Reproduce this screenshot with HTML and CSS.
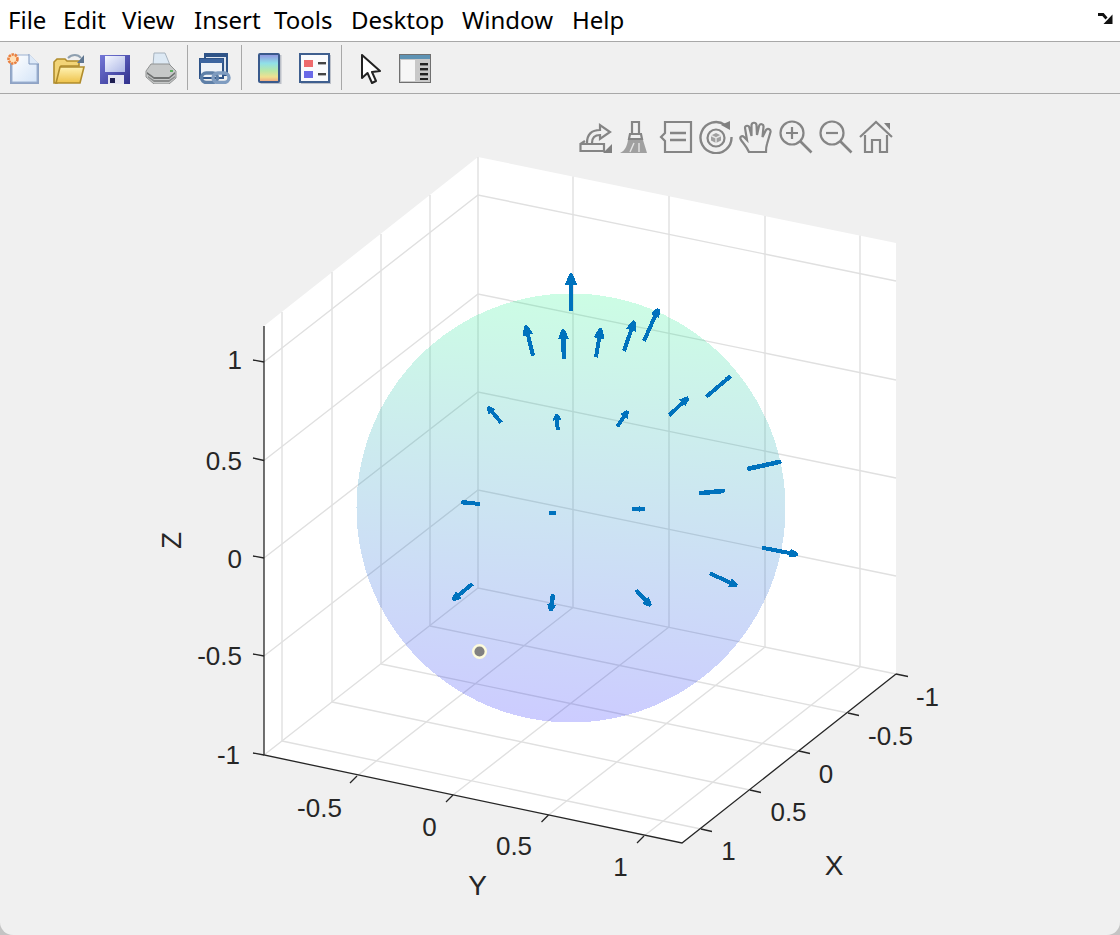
FILE: index.html
```html
<!DOCTYPE html>
<html lang="en">
<head>
<meta charset="utf-8">
<title>Figure</title>
<link rel="stylesheet" href="styles.css">
</head>
<body>
<div class="window">
  <nav class="menubar">
    <span class="menu-item">File</span>
    <span class="menu-item">Edit</span>
    <span class="menu-item">View</span>
    <span class="menu-item">Insert</span>
    <span class="menu-item">Tools</span>
    <span class="menu-item">Desktop</span>
    <span class="menu-item">Window</span>
    <span class="menu-item">Help</span>
    <svg class="undock" viewBox="0 0 16 13"><path d="M1 2.5 H6 L9.5 6.5" fill="none" stroke="#111" stroke-width="2.8"/><path d="M15.5 2.5 V12 H6.5 Z" fill="#111"/></svg>
  </nav>

  <div class="toolbar">
    <button class="tool">
      <svg class="tool-icon" viewBox="0 0 32 32">
        <defs><linearGradient id="pg" x1="0" y1="0" x2="1" y2="1"><stop offset="0" stop-color="#fff"/><stop offset="1" stop-color="#d4e4f8"/></linearGradient></defs>
        <path d="M3 3 H23 L32 12 V33 H3 Z" fill="#8fa3c4"/>
        <path d="M5 3 H22 L30 11 V30 H5 Z" fill="url(#pg)" stroke="#9db2d2" stroke-width="1"/>
        <path d="M22 2 V12 H32" fill="#dde9f8" stroke="#7f97bd"/>
        <circle cx="6" cy="7" r="4.5" fill="#ffe0b8" stroke="#ea8040" stroke-width="2.6" stroke-dasharray="2.4 .8"/>
      </svg>
    </button>
    <button class="tool">
      <svg class="tool-icon" viewBox="0 0 32 32">
        <defs><linearGradient id="fd" x1="0" y1="0" x2="0" y2="1"><stop offset="0" stop-color="#fff3b4"/><stop offset="1" stop-color="#eec24a"/></linearGradient></defs>
        <path d="M1 31 V10 L4 7 H12 L14 9 H26 V14 H8 L4 31 Z" fill="#f2d477" stroke="#b08c2c" stroke-width="1.6"/>
        <path d="M3 31 L7 15 H31 L27 31 Z" fill="url(#fd)" stroke="#b08c2c" stroke-width="1.6"/>
        <path d="M15 6 C19 2 25 2 28 6" fill="none" stroke="#8fa0b0" stroke-width="2"/>
        <path d="M31 3 V11 H24 Z" fill="#5f7690"/>
      </svg>
    </button>
    <button class="tool">
      <svg class="tool-icon" viewBox="0 0 32 32">
        <defs><linearGradient id="fl" x1="0" y1="0" x2="1" y2="1"><stop offset="0" stop-color="#7478d8"/><stop offset="1" stop-color="#30308c"/></linearGradient>
        <linearGradient id="lb" x1="0" y1="0" x2="1" y2="1"><stop offset="0" stop-color="#f4f7ff"/><stop offset="1" stop-color="#aeb8e6"/></linearGradient></defs>
        <path d="M1 3 H31 V32 H1 Z" fill="url(#fl)"/>
        <path d="M6 4 H26 V20 H6 Z" fill="url(#lb)"/>
        <path d="M9 23 H25 V32 H9 Z" fill="#e4e4f0"/>
        <rect x="11" y="26" width="5" height="5" fill="#1e1e50"/>
      </svg>
    </button>
    <button class="tool">
      <svg class="tool-icon" viewBox="0 0 32 32">
        <path d="M9 1 H20 L25 13 H8 Z" fill="#dde9f4" stroke="#a6b2bd"/>
        <path d="M6 12 H24 L31 19 V26 L24 32 H9 L1 25 V19 Z" fill="#c6c8c8" stroke="#909292"/>
        <path d="M2 20 L9 25 H24 L30 20 V22 L24 27 H9 L2 22 Z" fill="#6e7070"/>
        <path d="M3 24 L9 28 H24 L30 24 V25.5 L24 30 H9 L3 25.5 Z" fill="#8a8c8c"/>
        <rect x="25" y="18" width="3" height="2" fill="#5bb060"/>
      </svg>
    </button>
    <span class="sep"></span>
    <button class="tool">
      <svg class="tool-icon" viewBox="0 0 32 32">
        <rect x="6" y="2" width="22" height="21" fill="#dfe6f0" stroke="#2f5488" stroke-width="2"/>
        <rect x="6" y="1" width="22" height="4" fill="#2f5488"/>
        <rect x="1" y="7" width="23" height="19" fill="#eef2f7" stroke="#2f5488" stroke-width="2"/>
        <rect x="1" y="7" width="23" height="4" fill="#3c65a0"/>
        <rect x="2.5" y="21" width="16" height="9.5" rx="4.7" fill="none" stroke="#5f80a8" stroke-width="3.4"/>
        <rect x="14" y="21" width="16" height="9.5" rx="4.7" fill="none" stroke="#7f9cc0" stroke-width="3.4"/>
      </svg>
    </button>
    <span class="sep"></span>
    <button class="tool">
      <svg class="tool-icon" viewBox="0 0 32 32">
        <defs><linearGradient id="cb" x1="0" y1="0" x2="0" y2="1"><stop offset="0" stop-color="#9090e0"/><stop offset=".33" stop-color="#90e0e8"/><stop offset=".6" stop-color="#b8e8a8"/><stop offset=".82" stop-color="#f0e090"/><stop offset="1" stop-color="#f0a080"/></linearGradient></defs>
        <rect x="7.5" y="3" width="21" height="29" fill="#bcc0c8"/>
        <rect x="6" y="2" width="20" height="28" rx="1" fill="url(#cb)" stroke="#3a5a8c" stroke-width="2"/>
      </svg>
    </button>
    <button class="tool">
      <svg class="tool-icon" viewBox="0 0 32 32">
        <rect x="2" y="3" width="30" height="29" fill="#bcc0c8"/>
        <rect x="1" y="2" width="29" height="28" fill="#fafbfd" stroke="#3f5f8f" stroke-width="2"/>
        <rect x="5" y="8" width="9" height="7" fill="#ee6b6e"/>
        <rect x="5" y="19" width="9" height="7" fill="#6a6ae8"/>
        <rect x="19" y="10" width="8" height="2.4" fill="#444"/>
        <rect x="19" y="21" width="8" height="2.4" fill="#444"/>
      </svg>
    </button>
    <span class="sep"></span>
    <button class="tool">
      <svg class="tool-icon cursor-icon" viewBox="0 0 32 32">
        <path d="M7 3 L7 26 L12.5 21 L17 31 L21 29 L17 20 L25 19 Z" fill="#fff" stroke="#222" stroke-width="2" stroke-linejoin="round"/>
      </svg>
    </button>
    <button class="tool">
      <svg class="tool-icon" viewBox="0 0 32 32">
        <rect x="0.5" y="2.5" width="31" height="28" fill="#c8c8c8" stroke="#707070"/>
        <rect x="1" y="3" width="30" height="4" fill="#5e93b4"/>
        <rect x="2" y="8" width="14" height="21" fill="#f6f6f6"/>
        <rect x="21" y="11" width="8" height="2.4" fill="#222"/>
        <rect x="21" y="16" width="8" height="2.4" fill="#222"/>
        <rect x="21" y="21" width="8" height="2.4" fill="#222"/>
        <rect x="21" y="26" width="8" height="2" fill="#222"/>
      </svg>
    </button>
  </div>

  <main class="figure">
    <svg class="plot" viewBox="0 94 1120 841" xmlns="http://www.w3.org/2000/svg">
      <defs>
        <linearGradient id="sphere" gradientUnits="userSpaceOnUse" x1="582" y1="294" x2="560" y2="722">
          <stop offset="0" stop-color="#00f57a"/>
          <stop offset="1" stop-color="#0000ff"/>
        </linearGradient>
        <marker id="h12" markerUnits="userSpaceOnUse" markerWidth="13" markerHeight="14" refX="0" refY="7" orient="auto"><path d="M0 .5 L10 5 L12 6 L12 8 L10 9 L0 13.5 Z" fill="#0072bd"/></marker>
        <marker id="h10" markerUnits="userSpaceOnUse" markerWidth="11" markerHeight="13" refX="0" refY="6.5" orient="auto"><path d="M0 1.2 L8 4 L10 5.5 L10 7.5 L8 9 L0 11.8 Z" fill="#0072bd"/></marker>
        <marker id="h8" markerUnits="userSpaceOnUse" markerWidth="9" markerHeight="11" refX="0" refY="5.5" orient="auto"><path d="M0 1 L6 3 L8 4.2 L8 6.8 L6 8 L0 10 Z" fill="#0072bd"/></marker>
        <marker id="h7" markerUnits="userSpaceOnUse" markerWidth="8" markerHeight="11" refX="0" refY="5.5" orient="auto"><path d="M0 1 L7 4 L7 7 L0 10 Z" fill="#0072bd"/></marker>
        <marker id="h6" markerUnits="userSpaceOnUse" markerWidth="7" markerHeight="11" refX="0" refY="5.5" orient="auto"><path d="M0 1 L6 4 L6 7 L0 10 Z" fill="#0072bd"/></marker>
        <marker id="h6n" markerUnits="userSpaceOnUse" markerWidth="7" markerHeight="7" refX="0" refY="3.5" orient="auto"><path d="M0 .8 L6 1.8 L6 5.2 L0 6.2 Z" fill="#0072bd"/></marker>
      </defs>

      <polygon class="box" points="478,157 896,243 896,674 682,843 264,755 264,326"/>

      <g class="grid">
        <path d="M478 157 V588 M430 195 V626 M381 234 V664 M332 272 V702 M282 312 V741"/>
        <path d="M573 176.5 V607.5 M669 196 V627 M765 216 V647 M860 235.5 V667"/>
        <path d="M264 362 L478 195 L896 281"/>
        <path d="M264 460.5 L478 294 L896 380"/>
        <path d="M264 558 L478 392 L896 478"/>
        <path d="M264 656 L478 490 L896 576"/>
        <path d="M264 755 L478 588 L896 674"/>
        <path d="M357 776 L573 607.5 M453 795 L669 627 M548.5 815 L765 647 M644 836 L860 667"/>
        <path d="M848 713 L430 626 M799 751 L381 664 M750 790 L332 702 M701 829 L282 741"/>
      </g>

      <circle class="ball" cx="571" cy="508" r="214.5"/>

      <g class="axes">
        <path d="M264 326 V755 L682 843 L896 674"/>
        <path d="M264 362 L253 360 M264 460.5 L253 458 M264 558 L253 556 M264 656 L253 654 M264 755 L253 753"/>
        <path d="M357 776 L350 783 M453 795 L446 802 M548.5 815 L541.5 822 M644 836 L637 843"/>
        <path d="M896 674 L908 676.5 M848 713 L859 715.5 M799 751 L810 753.5 M750 790 L761 792.5 M701 829 L712 831.5"/>
      </g>

      <circle class="marker-dot" cx="479.5" cy="651.5" r="6.3"/>

      <g class="arrows">
        <line x1="571" y1="311" x2="571" y2="285" class="thick" marker-end="url(#h12)"/>
        <line x1="533" y1="355.7" x2="528" y2="335" marker-end="url(#h10)"/>
        <line x1="564" y1="358.7" x2="563.5" y2="339.3" class="thick" marker-end="url(#h10)"/>
        <line x1="596" y1="357.3" x2="599.1" y2="338.2" marker-end="url(#h10)"/>
        <line x1="624" y1="351" x2="631.1" y2="330.2" marker-end="url(#h10)"/>
        <line x1="644" y1="341" x2="655.1" y2="316" marker-end="url(#h8)"/>
        <line x1="706.3" y1="396.7" x2="726.2" y2="379.9" marker-end="url(#h6n)"/>
        <line x1="669.3" y1="415.3" x2="682.5" y2="402.8" marker-end="url(#h8)"/>
        <line x1="617.3" y1="426.7" x2="623.9" y2="416.6" marker-end="url(#h7)"/>
        <line x1="557.7" y1="429.7" x2="557.1" y2="420.3" marker-end="url(#h6)"/>
        <line x1="501.3" y1="422.7" x2="492.2" y2="412" marker-end="url(#h7)"/>
        <line x1="480" y1="504" x2="467.3" y2="502.8" marker-end="url(#h6n)"/>
        <line x1="555.7" y1="513" x2="549" y2="513" class="thick"/>
        <line x1="632" y1="509" x2="638.7" y2="509" class="thick" marker-end="url(#h6n)"/>
        <line x1="699.3" y1="493.3" x2="718.7" y2="491.3" class="thick" marker-end="url(#h6n)"/>
        <line x1="747.3" y1="469" x2="775.5" y2="462.8" class="thick" marker-end="url(#h6n)"/>
        <line x1="762" y1="547.7" x2="789.9" y2="553.1" marker-end="url(#h8)"/>
        <line x1="710" y1="573.3" x2="730" y2="582.6" marker-end="url(#h8)"/>
        <line x1="636" y1="590" x2="645.3" y2="600.1" marker-end="url(#h8)"/>
        <line x1="553" y1="594.3" x2="551.6" y2="604.4" class="thick" marker-end="url(#h7)"/>
        <line x1="472.3" y1="584" x2="458.9" y2="594.9" marker-end="url(#h8)"/>
      </g>

      <g class="ticks ticks-end">
        <text x="242" y="369">1</text>
        <text x="242" y="470">0.5</text>
        <text x="242" y="568">0</text>
        <text x="242" y="665">-0.5</text>
        <text x="240" y="764">-1</text>
      </g>
      <g class="ticks ticks-mid">
        <text x="319.5" y="817">-0.5</text>
        <text x="429.5" y="836">0</text>
        <text x="514" y="855">0.5</text>
        <text x="620.5" y="876">1</text>
        <text x="927.5" y="706">-1</text>
        <text x="890.5" y="745">-0.5</text>
        <text x="826" y="783">0</text>
        <text x="788.5" y="821">0.5</text>
        <text x="728.5" y="860">1</text>
      </g>
      <g class="labels">
        <text x="834" y="875">X</text>
        <text x="477.5" y="895">Y</text>
        <text transform="translate(181 540.5) rotate(-90)">Z</text>
      </g>
    </svg>

    <div class="axes-toolbar">
      <svg class="ax-icon" viewBox="0 0 34 34">
        <path d="M1.5 24 H25 V31 H1.5 Z M1.5 24 L6 21"/>
        <path d="M8 23 C8 14 13 10 21 10 V5 L31 12 L21 19 V15 C16 15 13 18 13 23"/>
        <path class="fill" d="M33 24 V33 H24 Z"/>
      </svg>
      <svg class="ax-icon" viewBox="0 0 34 34">
        <path d="M13 13 V2 H20 V13"/>
        <path d="M11 14 H22 L23 19 H10 Z"/>
        <path class="fill soft" d="M9 20 H24 L28 33 H1 C6 31 8 26 9 20 Z"/>
        <path class="light" d="M15 23 L11 32 M20 23 L20 32"/>
      </svg>
      <svg class="ax-icon" viewBox="0 0 34 34">
        <path d="M6 2 H32 V32 H6 V21 L2 17 L6 13 Z"/>
        <path d="M11 13 H27 M11 20 H27" stroke-width="2.6"/>
      </svg>
      <svg class="ax-icon" viewBox="0 0 34 34">
        <path d="M26 5 A15.5 15.5 0 1 0 32.5 17" stroke-width="2.4"/>
        <path class="fill" d="M22 5 L31 1 L31 10 Z"/>
        <circle cx="17" cy="18" r="8.5" stroke-width="2.2"/>
        <path class="fill soft" d="M17 13 L22 15.5 L22 20.5 L17 23 L12 20.5 L12 15.5 Z"/>
        <path class="light" d="M12 15.5 L17 18 L22 15.5 M17 18 V23"/>
      </svg>
      <svg class="ax-icon" viewBox="0 0 34 34">
        <path d="M10 32 C8 27 5 24 2 20 C0 17 3 15 5 17 L8 20 L6 8 C6 5 10 5 10.5 8 L12.5 16 L12.5 5 C13 2 17 2 17.5 5 L18 15 L20 6 C21 3 25 4 24.5 7 L23.5 17 L27 10 C28.5 8 32 9 31.5 12 L28 24 C27 27 27 29 27 32 Z"/>
      </svg>
      <svg class="ax-icon" viewBox="0 0 34 34">
        <circle cx="13" cy="13" r="11.5"/>
        <path d="M21.5 21.5 L32.5 32.5" stroke-width="2.6"/>
        <path d="M7 13 H19 M13 7 V19"/>
      </svg>
      <svg class="ax-icon" viewBox="0 0 34 34">
        <circle cx="13" cy="13" r="11.5"/>
        <path d="M21.5 21.5 L32.5 32.5" stroke-width="2.6"/>
        <path d="M7 13 H19"/>
      </svg>
      <svg class="ax-icon" viewBox="0 0 34 34">
        <path d="M1 17 L17 2 L33 17"/>
        <path d="M6 15 V32 H13 V20 H21 V32 H28 V15"/>
        <path class="fill" d="M25 3 H31 V10 Z"/>
      </svg>
    </div>
  </main>
</div>
</body>
</html>
```

FILE: styles.css
```css
* { box-sizing: border-box; }

html, body {
  margin: 0;
  height: 100%;
  background: #c4c4c4;
  overflow: hidden;
}

.window {
  width: 1120px;
  height: 935px;
  display: flex;
  flex-direction: column;
  background: #f0f0f0;
  border-radius: 0 0 13px 13px;
  overflow: hidden;
}

.menubar {
  height: 42px;
  flex: none;
  display: grid;
  grid-template-columns: 55px 59px 72px 80px 77px 111px 110px 1fr auto;
  align-items: center;
  padding: 0 0 1px 8px;
  background: #fff;
  border-bottom: 1px solid #a8a8a8;
  font: 24px/1 "Noto Sans", sans-serif;
  color: #000;
}

.undock {
  grid-column: 9;
  width: 16px;
  height: 13px;
  margin-right: 7px;
  margin-top: -3px;
}

.toolbar {
  height: 52px;
  flex: none;
  display: flex;
  align-items: center;
  background: #f0f0f0;
  border-bottom: 1px solid #a8a8a8;
}

.tool {
  width: 46px;
  height: 46px;
  padding: 0;
  border: 0;
  background: none;
  display: flex;
  align-items: center;
  justify-content: center;
}

.tool-icon {
  width: 32px;
  height: 32px;
  display: block;
  filter: blur(0.45px);
}

.cursor-icon { margin-left: 3px; }

.sep {
  width: 1px;
  height: 45px;
  margin: 0 4px 0 3px;
  background: #a8a8a8;
}

.figure {
  position: relative;
  flex: 1;
}

.plot {
  display: block;
  width: 1120px;
  height: 841px;
}

.box { fill: #fff; }

.grid path {
  fill: none;
  stroke: #e0e0e0;
  stroke-width: 1.4;
}

.ball {
  fill: url(#sphere);
  fill-opacity: 0.2;
  shape-rendering: crispEdges;
}

.axes path {
  fill: none;
  stroke: #262626;
  stroke-width: 1.3;
}

.marker-dot {
  fill: #808080;
  stroke: #fdfbdc;
  stroke-width: 2.4;
}

.arrows line {
  stroke: #0072bd;
  stroke-width: 4;
  shape-rendering: crispEdges;
}

.arrows .thick { stroke-width: 4.6; }

marker path { shape-rendering: crispEdges; }

.ticks, .labels {
  font-family: "Liberation Sans", Arial, sans-serif;
  fill: #262626;
}

.ticks { font-size: 26px; }
.ticks-end { text-anchor: end; }
.ticks-mid { text-anchor: middle; }

.labels {
  font-size: 28px;
  text-anchor: middle;
}

.axes-toolbar {
  position: absolute;
  top: 26px;
  left: 579px;
  display: flex;
  gap: 6px;
}

.ax-icon {
  width: 34px;
  height: 34px;
  display: block;
  fill: none;
  stroke: #858585;
  stroke-width: 2.2;
  filter: blur(0.35px);
}

.ax-icon .fill {
  fill: #808080;
  stroke: none;
}

.ax-icon .soft { fill: #a0a0a0; }

.ax-icon .light {
  stroke: #e4e4e4;
  stroke-width: 1.4;
}
```
